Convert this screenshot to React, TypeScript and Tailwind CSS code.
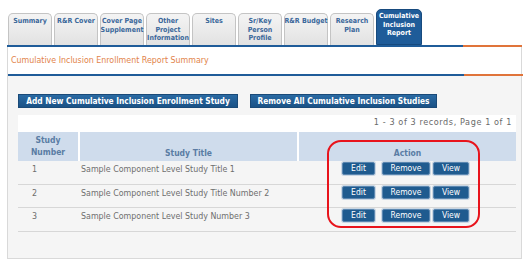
import React from "react";

const tabs: { label: string[]; active?: boolean }[] = [
  { label: ["Summary"] },
  { label: ["R&R Cover"] },
  { label: ["Cover Page", "Supplement"] },
  { label: ["Other", "Project", "Information"] },
  { label: ["Sites"] },
  { label: ["Sr/Key", "Person", "Profile"] },
  { label: ["R&R Budget"] },
  { label: ["Research", "Plan"] },
  { label: ["Cumulative", "Inclusion", "Report"], active: true },
];

const rows = [
  { n: "1", title: "Sample Component Level Study Title 1" },
  { n: "2", title: "Sample Component Level Study Title Number 2" },
  { n: "3", title: "Sample Component Level Study Number 3" },
];

function SmallBtn({ label, w }: { label: string; w: string }) {
  return (
    <div
      className={`${w} h-[13px] rounded-[2px] bg-[#1f5b8f] border border-[#5a86b0] text-white text-[8.5px] leading-[11px] flex items-center justify-center shadow-[0_0_0_1px_#c9d6e3]`}
    >
      {label}
    </div>
  );
}

function SplitLine() {
  return (
    <div className="flex h-[2px] w-[515px]">
      <div className="w-[456px] bg-[#1f5c99]" />
      <div className="flex-1 bg-[#e0743a]" />
    </div>
  );
}

export default function App() {
  return (
    <div
      className="relative w-[528px] h-[262px] bg-white overflow-hidden"
      style={{ fontFamily: '"DejaVu Sans Condensed", "Liberation Sans", sans-serif' }}
    >
      {/* Tabs */}
      <div className="flex items-end gap-[2px] pl-[8px] h-[45px]">
        {tabs.map((t, i) => (
          <div
            key={i}
            className={
              t.active
                ? "w-[46px] h-[36px] rounded-t-[5px] bg-[#1f5c99] border border-[#174a7e] text-white flex flex-col items-center pt-[2px]"
                : "w-[44px] h-[32px] rounded-t-[5px] bg-gradient-to-b from-[#f4f4f4] to-[#e2e2e2] border border-b-0 border-[#c4c4c4] text-[#3a679a] flex flex-col items-center pt-[3px]"
            }
          >
            {t.label.map((l, j) => (
              <div key={j} className="text-[7px] font-bold leading-[8.5px] whitespace-nowrap">
                {l}
              </div>
            ))}
          </div>
        ))}
      </div>

      <div className="ml-[7px]">
        <SplitLine />
        <div className="w-[515px] h-[212px] border-x border-b border-[#d9d9d9] flex flex-col">
          <div className="h-[27px] bg-white flex items-center pl-[3px] text-[8.8px] text-[#e2834a]">
            Cumulative Inclusion Enrollment Report Summary
          </div>
          <SplitLine />
          <div className="flex-1 bg-[#f5f5f5] px-[10px] pt-[18px]">
            <div className="flex gap-[12px]">
              <div className="w-[220px] h-[14px] bg-gradient-to-b from-[#2a6aa3] to-[#1a5286] border border-[#1a4a78] text-white text-[8.3px] font-bold flex items-center justify-center">
                Add New Cumulative Inclusion Enrollment Study
              </div>
              <div className="w-[187px] h-[14px] bg-gradient-to-b from-[#2a6aa3] to-[#1a5286] border border-[#1a4a78] text-white text-[8.3px] font-bold flex items-center justify-center">
                Remove All Cumulative Inclusion Studies
              </div>
            </div>
            <div className="mt-[7px] w-[498px] flex flex-col">
              <div className="h-[16px] bg-white flex items-center justify-end pr-[4px] text-[9px] tracking-[0.6px] text-[#6a6a6a]">
                1 - 3 of 3 records, Page 1 of 1
              </div>
              <div className="h-[1px] bg-white" />
              <div className="flex h-[29px] bg-[#cfdcec] text-[#5a7ca4] text-[8.5px] font-semibold">
                <div className="w-[60px] flex flex-col items-center pt-[2px] leading-[12px]">
                  <span>Study</span>
                  <span>Number</span>
                </div>
                <div className="w-[2px] bg-white" />
                <div className="w-[217px] flex items-end justify-center pb-[2px] leading-[12px]">
                  Study Title
                </div>
                <div className="w-[2px] bg-white" />
                <div className="flex-1 flex items-end justify-center pb-[2px] leading-[12px]">
                  Action
                </div>
              </div>
              {rows.map((r) => (
                <div key={r.n} className="flex h-[23.5px] border-b border-[#d7d7d7] text-[8.8px] text-[#6e6e6e]">
                  <div className="w-[62px] pl-[14px] pt-[2px]">{r.n}</div>
                  <div className="w-[217px] pl-[1px] pt-[2px] whitespace-nowrap">{r.title}</div>
                  <div className="flex-1 flex gap-[3px] pt-[1px] pl-[45px]">
                    <SmallBtn label="Edit" w="w-[33px]" />
                    <div className="w-[1px]" />
                    <SmallBtn label="Remove" w="w-[48px]" />
                    <SmallBtn label="View" w="w-[36px]" />
                  </div>
                </div>
              ))}
            </div>
          </div>
        </div>
      </div>

      {/* Red highlight */}
      <div className="absolute left-[327px] top-[140px] w-[153px] h-[88px] border-2 border-[#e8141c] rounded-[14px]" />
    </div>
  );
}
